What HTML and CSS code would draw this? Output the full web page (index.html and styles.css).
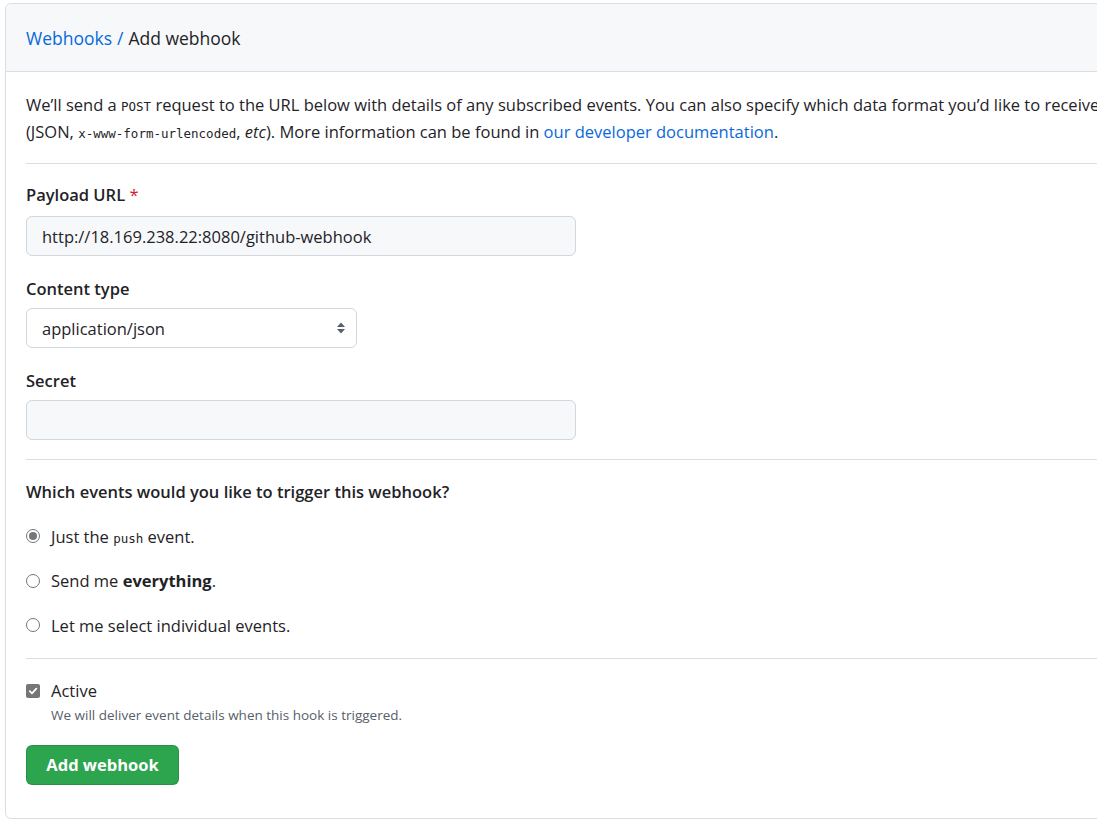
FILE: index.html
```html
<!DOCTYPE html>
<html>
<head>
<meta charset="utf-8">
<link rel="stylesheet" href="styles.css">
</head>
<body>
<div class="card">
  <div class="card-head">
    <a class="crumb" href="#">Webhooks</a><span class="sep">/</span><span class="title">Add webhook</span>
  </div>
  <div class="card-body">
    <p class="intro">We’ll send a <code>POST</code> request to the URL below with details of any subscribed events. You can also specify which data format you’d like to receive (JSON, <code>x-www-form-urlencoded</code>, <em>etc</em>). More information can be found in <a href="#">our developer documentation</a>.</p>
    <hr class="rule">
    <div class="field first">
      <label class="lbl">Payload URL <span class="req">*</span></label>
      <div class="input wide">http://18.169.238.22:8080/github-webhook</div>
    </div>
    <div class="field">
      <label class="lbl">Content type</label>
      <div class="input select">
        <span>application/json</span>
        <svg class="caret" width="10" height="14" viewBox="0 0 10 14"><path d="M5 1.5 L9 6 H1 Z" fill="#57606a"/><path d="M5 12.5 L9 8 H1 Z" fill="#57606a"/></svg>
      </div>
    </div>
    <div class="field">
      <label class="lbl">Secret</label>
      <div class="input wide"></div>
    </div>
    <hr class="rule r2">
    <h3 class="q">Which events would you like to trigger this webhook?</h3>
    <div class="radios">
      <div class="opt"><span class="radio on"></span><span>Just the <code class="push">push</code> event.</span></div>
      <div class="opt"><span class="radio"></span><span>Send me <strong>everything</strong>.</span></div>
      <div class="opt"><span class="radio"></span><span>Let me select individual events.</span></div>
    </div>
    <hr class="rule r3">
    <div class="check">
      <span class="box"><svg width="10" height="10" viewBox="0 0 10 10"><path d="M1.8 5.2 L4 7.3 L8.3 2.6" fill="none" stroke="#fff" stroke-width="1.8" stroke-linecap="round" stroke-linejoin="round"/></svg></span>
      <div>
        <div class="active">Active</div>
        <div class="note">We will deliver event details when this hook is triggered.</div>
      </div>
    </div>
    <button class="btn">Add webhook</button>
  </div>
</div>
</body>
</html>
```

FILE: styles.css
```css
html, body {
  margin: 0;
  padding: 0;
  background: #fff;
  overflow: hidden;
}
body {
  font-family: "Open Sans", "Liberation Sans", sans-serif;
  color: #1f2328;
  font-size: 16.5px;
}
.card {
  margin: 3px 0 0 5px;
  width: 1200px;
  border: 1px solid #d8dee4;
  border-radius: 6px;
  background: #fff;
}
.card-head {
  height: 67px;
  background: #f6f8fa;
  border-bottom: 1px solid #d8dee4;
  border-radius: 6px 6px 0 0;
  display: flex;
  align-items: center;
  padding: 0 20px;
  font-size: 17.5px;
}
.crumb {
  color: #0969da;
  text-decoration: none;
}
.sep {
  color: #0969da;
  margin: 0 5px;
}
.title {
  color: #1f2328;
}
.card-body {
  padding: 19px 20px 33px 20px;
}
.intro {
  margin: 0;
  line-height: 27px;
  width: 1110px;
}
.intro a {
  color: #0969da;
  text-decoration: none;
}
code {
  font-family: "DejaVu Sans Mono", "Liberation Mono", monospace;
  font-size: 12.5px;
  line-height: 1;
}
.rule {
  border: 0;
  border-top: 1px solid #d8dee4;
  margin: 18px 0 0 0;
}
.field {
  margin-top: 21px;
}
.field.first {
  margin-top: 19px;
}
.lbl {
  display: block;
  font-weight: 600;
  line-height: 24px;
  margin-bottom: 7px;
}
.first .lbl {
  margin-bottom: 9px;
}
.req {
  color: #cf222e;
  font-weight: 400;
}
.input {
  box-sizing: border-box;
  height: 40px;
  border: 1px solid #d0d7de;
  border-radius: 6px;
  background: #f6f8fa;
  padding: 0 15px;
  display: flex;
  align-items: center;
}
.input.wide {
  width: 550px;
}
.input.select {
  width: 331px;
  background: #fff;
  justify-content: space-between;
  padding-right: 10px;
}
.caret {
  display: block;
}
.r2 {
  margin-top: 19px;
}
.q {
  margin: 20px 0 0 0;
  font-size: 16.5px;
  font-weight: 600;
  line-height: 24px;
}
.radios {
  margin-top: 10px;
}
.opt {
  display: flex;
  align-items: center;
  gap: 11px;
  height: 44.5px;
}
.radio {
  box-sizing: border-box;
  width: 14px;
  height: 14px;
  border: 1px solid #6e7781;
  border-radius: 50%;
  background: #fff;
  position: relative;
}
.radio.on::after {
  content: "";
  position: absolute;
  left: 2px;
  top: 2px;
  width: 8px;
  height: 8px;
  border-radius: 50%;
  background: #767676;
}
.push {
  font-size: 12.5px;
}
.r3 {
  margin-top: 10px;
}
.check {
  display: flex;
  gap: 11px;
  margin-top: 20px;
}
.box {
  box-sizing: border-box;
  width: 14px;
  height: 14px;
  border-radius: 2px;
  background: #767676;
  display: flex;
  align-items: center;
  justify-content: center;
  margin-top: 5px;
}
.box svg {
  display: block;
}
.active {
  line-height: 24px;
  font-weight: 500;
}
.note {
  font-size: 13.5px;
  color: #57606a;
  line-height: 21px;
  margin-top: 2px;
}
.btn {
  margin-top: 19px;
  height: 40px;
  width: 153px;
  border: 1px solid rgba(27, 31, 36, 0.15);
  border-radius: 6px;
  background: #2da44e;
  color: #fff;
  font-family: inherit;
  font-size: 16.5px;
  font-weight: 700;
  display: block;
}
```
